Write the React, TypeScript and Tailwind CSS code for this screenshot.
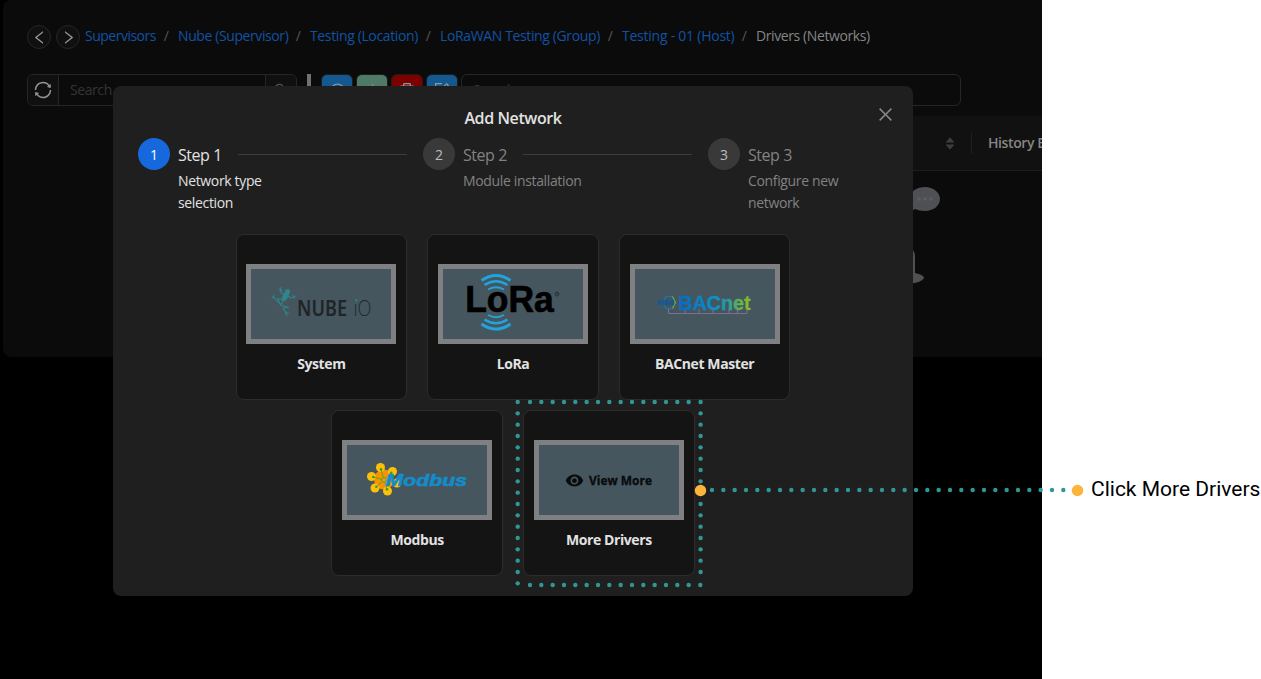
import React from "react";
import {
  AiOutlineSync,
  AiOutlineSearch,
  AiOutlinePlus,
  AiOutlineDelete,
  AiOutlineForm,
  AiOutlineLeft,
  AiOutlineRight,
  AiOutlineClose,
  AiFillCaretUp,
  AiFillCaretDown,
} from "react-icons/ai";
import { MdVisibility } from "react-icons/md";

const crumbs = [
  { text: "Supervisors", slot: "w-[93px]", tracking: "tracking-[-0.5px]" },
  { text: "Nube (Supervisor)", slot: "w-[132px]", tracking: "tracking-[-0.4px]" },
  { text: "Testing (Location)", slot: "w-[130px]", tracking: "tracking-[-0.37px]" },
  { text: "LoRaWAN Testing (Group)", slot: "w-[182px]", tracking: "tracking-[-0.37px]" },
  { text: "Testing - 01 (Host)", slot: "w-[134px]", tracking: "tracking-[-0.24px]" },
];

function Breadcrumbs() {
  return (
    <div className="flex h-6 items-center pl-6">
      <div className="flex size-6 items-center justify-center rounded-full border border-[#262626] bg-[#101010] text-[#949494]">
        <AiOutlineLeft size={17} className="shrink-0" />
      </div>
      <div className="ml-[5px] flex size-6 items-center justify-center rounded-full border border-[#262626] bg-[#101010] text-[#949494]">
        <AiOutlineRight size={17} className="shrink-0" />
      </div>
      <div className="ml-[5px] flex whitespace-nowrap pb-[2px] text-[14px] leading-[22px] text-[#1252a4]">
        {crumbs.map((c) => (
          <div key={c.text} className={"flex justify-between " + c.slot}>
            <span className={c.tracking}>{c.text}</span>
            <span className="pr-[9px] text-[#565656]">/</span>
          </div>
        ))}
        <span className="tracking-[-0.4px] text-[#858585]">Drivers (Networks)</span>
      </div>
    </div>
  );
}

const tool = "flex h-8 w-8 items-center justify-center rounded-md border border-[#1c1c1c] text-[#8b979f]";

function Toolbar() {
  return (
    <div className="mt-[25px] flex h-8 pl-6">
      <div className="flex w-[270px] overflow-hidden rounded-md border border-[#262626] text-[14px]">
        <div className="flex w-[31px] items-center justify-center border-r border-[#262626] bg-[#101010] text-[#949494]">
          <AiOutlineSync size={20} />
        </div>
        <div className="flex flex-1 items-center pb-px pl-[11px] tracking-[-0.42px] text-[#343434]">Search</div>
        <div className="flex w-[31px] items-center justify-center border-l border-[#262626] bg-[#101010] text-[#505050]">
          <AiOutlineSearch size={16} />
        </div>
      </div>
      <div className="ml-[10px] w-1 bg-[#707070]" />
      <div className="ml-[10px] flex gap-[3px]">
        <div className={tool + " bg-[#15578f]"}><AiOutlineSync size={17} /></div>
        <div className={tool + " bg-[#4f7b66]"}><AiOutlinePlus size={17} /></div>
        <div className={tool + " bg-[#7c0000]"}><AiOutlineDelete size={18} /></div>
        <div className={tool + " bg-[#15578f]"}><AiOutlineForm size={18} /></div>
      </div>
      <div className="ml-[3px] flex w-[500px] items-center rounded-md border border-[#262626] pb-px pl-[11px] text-[14px] tracking-[-0.42px] text-[#343434]">
        Search
      </div>
    </div>
  );
}

function TableArea() {
  return (
    <div className="mt-[10px] ml-[300px] h-[241px] overflow-hidden">
      <div className="flex h-[55px] items-center justify-end border-b border-[#1c1c1c] bg-[#111111]">
        <div className="flex flex-col items-center text-[#3d3d3d]">
          <AiFillCaretUp size={12} className="-mb-[5px]" />
          <AiFillCaretDown size={12} />
        </div>
        <div className="ml-[15px] h-[22px] w-px bg-[#202020]" />
        <div className="w-[70px] overflow-hidden whitespace-nowrap pb-px pl-4 text-[14px] font-semibold tracking-[-0.4px] text-[#858585]">
          History Enable
        </div>
      </div>
      <div className="flex justify-end pt-3 pr-[101px]">
        <svg width="42" height="105" viewBox="0 0 42 105">
          <path d="M12 28 L14 22 Q12 20 11 16 C11 8 18 4 26 4 C34 4 41 9 41 16 C41 23 34 28 26 28 C22 28 19 27 16 26 Z" fill="#4f5053" />
          <circle cx="20" cy="16" r="1.8" fill="#5c5d60" />
          <circle cx="26" cy="16" r="1.8" fill="#5c5d60" />
          <circle cx="32" cy="16" r="1.8" fill="#5c5d60" />
          <path d="M8 62 L14 67 Q16 70 16 73 L16 90 Q25 92 25 95 Q23 100 8 101 Z" fill="#505050" />
          <path d="M8 69 L13 68 L14 91 L8 94 Z" fill="#5b5b5b" />
        </svg>
      </div>
    </div>
  );
}

const steps = [
  { n: 1, title: "Step 1", text: "Network type selection", on: true },
  { n: 2, title: "Step 2", text: "Module installation", on: false },
  { n: 3, title: "Step 3", text: "Configure new network", on: false },
];

function Steps() {
  return (
    <div className="flex gap-4 pl-[25px]">
      {steps.map((s) => (
        <div key={s.n} className={"flex gap-2 " + (s.n === 3 ? "w-[160px]" : "w-[269px]")}>
          <div
            className={
              "flex size-8 shrink-0 items-center justify-center rounded-full pt-px text-[14px] " +
              (s.on ? "bg-[#1668dc] text-white" : "bg-[#393939] text-[#bdbdbd]")
            }
          >
            {s.n}
          </div>
          <div className="flex-1">
            <div className="flex h-8 items-center">
              <span className={"w-[60px] whitespace-nowrap pt-px text-[16px] tracking-[-0.45px] " + (s.on ? "text-[#e2e2e2]" : "text-[#828282]")}>
                {s.title}
              </span>
              {s.n < 3 && <div className="h-px flex-1 bg-[#3c3c3c]" />}
            </div>
            <div className={"w-[125px] text-[14px] leading-[22px] tracking-[-0.35px] " + (s.on ? "text-[#e2e2e2]" : "text-[#828282]")}>
              <div className={s.n === 2 ? "whitespace-nowrap" : "w-[105px]"}>{s.text}</div>
            </div>
          </div>
        </div>
      ))}
    </div>
  );
}

function NubeLogo() {
  return (
    <svg width="140" height="70" viewBox="0 0 140 70">
      <g stroke="#30858a" fill="none" strokeLinejoin="round" strokeLinecap="round">
        <ellipse cx="34.5" cy="27" rx="2.8" ry="6" transform="rotate(28 34.5 27)" fill="#30858a" stroke="none" />
        <circle cx="36.5" cy="22.5" r="2.6" fill="#30858a" stroke="none" />
        <path d="M34 25 L30.500 24.500 L29.500 21" strokeWidth="1.200" />
        <path d="M37 27 L39.500 29 L43.500 27.500" strokeWidth="1.200" />
        <path d="M32.500 31 L26.500 29.500 L29 35 L22.500 28" strokeWidth="1.100" />
        <path d="M31.500 33 L29.500 36 L37.500 38.500 L32 39 L35.500 44.500" strokeWidth="1.200" />
        <path d="M27.500 20 L31.500 21.500 M30 18.500 L29 22.500 M42 26 L43.500 29.500 M41.500 28.500 L45 27 M21 27.500 L24 28.500 M23 25.500 L22 29.500 M34 45 L37.500 44 M35 43 L36 47" strokeWidth="0.900" />
      </g>
      <text x="46" y="46.5" fontFamily="Noto Sans, Open Sans, sans-serif" fontWeight="600" fontSize="21.500" textLength="50" lengthAdjust="spacingAndGlyphs" fill="#1f2427">NUBE</text>
      <text x="102.5" y="46.5" fontFamily="Open Sans, sans-serif" fontWeight="300" fontSize="21.500" textLength="18" lengthAdjust="spacingAndGlyphs" fill="#1f2a2f">iO</text>
      <circle cx="105.200" cy="31.5" r="1.300" fill="#30858a" />
    </svg>
  );
}

function LoraLogo() {
  return (
    <svg width="140" height="70" viewBox="0 0 140 70">
      <g fill="none" stroke="#22a3dc">
        <path d="M38.500 11.500 Q53 1.500 67.500 11.500" strokeWidth="3" />
        <path d="M41.500 16 Q53 8.500 64.500 16" strokeWidth="2.500" />
        <path d="M45 20.500 Q53 16 61 20.500" strokeWidth="2" />
        <path d="M38.500 55 Q53 65 67.500 55" strokeWidth="3" />
        <path d="M41.500 50.500 Q53 58 64.500 50.500" strokeWidth="2.500" />
        <path d="M45 46 Q53 50.500 61 46" strokeWidth="2" />
      </g>
      <text x="22.200" y="42.700" fontFamily="Liberation Sans, sans-serif" fontWeight="700" fontSize="36" textLength="88.500" lengthAdjust="spacingAndGlyphs" fill="#000" stroke="#000" strokeWidth="0.700">LoRa</text>
      <circle cx="114" cy="25" r="2" fill="none" stroke="#222c31" strokeWidth="0.800" />
      <path d="M113.500 26.300 V23.800 H114.500 V25 L115 26.300" fill="none" stroke="#222c31" strokeWidth="0.400" />
    </svg>
  );
}

function BacnetLogo() {
  return (
    <svg width="140" height="70" viewBox="0 0 140 70">
      <defs>
        <linearGradient id="bac" x1="0" x2="1">
          <stop offset="0" stopColor="#0868bd" />
          <stop offset="0.5" stopColor="#0b92c9" />
          <stop offset="0.68" stopColor="#269da2" />
          <stop offset="0.85" stopColor="#64b54e" />
          <stop offset="1" stopColor="#8ebd18" />
        </linearGradient>
      </defs>
      <path d="M33.500 39 V44.500 H112 V41 M50 40 V44.500 M64 40 V44.500 M78 40 V44.500 M94 40 V44.500 M102.500 40 V44.500" fill="none" stroke="#7b7196" strokeWidth="1" />
      <path d="M28 33.500 L31 27.500 H37.500 L40.500 33.500 L37.500 39.500 H31 Z" fill="none" stroke="#147da6" strokeWidth="1.200" />
      <path d="M37.500 27.500 L40.500 33.500 L37.500 39.500" fill="none" stroke="#71a543" strokeWidth="1.200" />
      <text x="22" y="35.700" fontFamily="Liberation Sans, sans-serif" fontWeight="700" fontSize="6.500" textLength="17" lengthAdjust="spacingAndGlyphs" fill="#12569a" stroke="#12569a" strokeWidth="0.300">ASHRAE</text>
      <text x="43.500" y="41" fontFamily="Liberation Sans, sans-serif" fontWeight="700" fontSize="20" textLength="72" lengthAdjust="spacingAndGlyphs" fill="url(#bac)" stroke="url(#bac)" strokeWidth="0.300">BACnet</text>
      <text x="115" y="30" fontFamily="Liberation Sans, sans-serif" fontSize="3" fill="#2a6288">TM</text>
    </svg>
  );
}

const petals = [
  [33.5, 22.5],
  [45.5, 26.5],
  [24.5, 31.5],
  [28, 43],
  [40.5, 46],
  [50, 38],
];

function ModbusLogo() {
  return (
    <svg width="140" height="70" viewBox="0 0 140 70">
      <circle cx="37" cy="34.500" r="10" fill="#f59300" />
      {petals.map(([x, y]) => (
        <circle key={x} cx={x} cy={y} r="4.500" fill="#fcc106" />
      ))}
      {petals.map(([x, y]) => (
        <g key={x}>
          <path d={`M37 35 L${x + (37 - x) * 0.15} ${y + (35 - y) * 0.15}`} stroke="#56a52a" strokeWidth="0.900" />
          <circle cx={x + (37 - x) * 0.15} cy={y + (35 - y) * 0.15} r="1.300" fill="#3d9b2d" />
        </g>
      ))}
      <circle cx="37" cy="35" r="2.200" fill="#f5a300" stroke="#56a52a" />
      <text x="38.500" y="41" fontFamily="Liberation Sans, sans-serif" fontWeight="700" fontStyle="italic" fontSize="16.500" textLength="81.500" lengthAdjust="spacingAndGlyphs" fill="#148ccb" stroke="#148ccb" strokeWidth="0.600">Modbus</text>
    </svg>
  );
}

function ViewMore() {
  return (
    <div className="flex h-[70px] w-[140px] items-center pl-[26px] text-[#080b0c]">
      <MdVisibility size={19} />
      <svg width="70" height="24" viewBox="0 0 70 24">
        <text x="5" y="16.500" fontFamily="Open Sans, Noto Sans, sans-serif" fontWeight="700" fontSize="12.500" textLength="63" lengthAdjust="spacingAndGlyphs" fill="#080b0c" stroke="#080b0c" strokeWidth="0.300">View More</text>
      </svg>
    </div>
  );
}

function DriverCard({ label, children }: { label: string; children: React.ReactNode }) {
  return (
    <div className="flex h-[166px] w-[171.67px] flex-col items-center rounded-lg border border-[#2c2c2c] bg-[#141414] pt-[29px]">
      <div className="h-20 w-[150px] shrink-0 border-[5px] border-[#808080] bg-[#45565f]">{children}</div>
      <div className="mt-[9px] text-[14px] font-bold leading-[22px] tracking-[-0.4px] text-[#e2e2e2]">{label}</div>
    </div>
  );
}

function AddNetworkDialog() {
  return (
    <div className="absolute left-[113px] top-[86px] h-[510px] w-[800px] rounded-lg bg-[#1f1f1f]">
      <div className="flex h-[52px] justify-center pt-5">
        <h1 className="text-[16px] font-semibold leading-6 tracking-[-0.4px] text-[#e2e2e2]">Add Network</h1>
        <AiOutlineClose size={19} className="absolute right-[18.5px] top-[18.5px] text-[#8a8a8a]" />
      </div>
      <div className="h-24">
        <Steps />
      </div>
      <div className="flex flex-wrap justify-center gap-x-5 gap-y-[10px] px-[100px]">
        <DriverCard label="System"><NubeLogo /></DriverCard>
        <DriverCard label="LoRa"><LoraLogo /></DriverCard>
        <DriverCard label="BACnet Master"><BacnetLogo /></DriverCard>
        <DriverCard label="Modbus"><ModbusLogo /></DriverCard>
        <DriverCard label="More Drivers"><ViewMore /></DriverCard>
      </div>
    </div>
  );
}

const pitch = 34 / 3;
const dots: number[][] = [];
for (let i = 0; i < 17; i++) dots.push([517.7, 402 + i * pitch]);
for (let i = 0; i < 15; i++) dots.push([530 + i * pitch, 402], [530 + i * pitch, 585]);
for (let i = 0; i < 16; i++) if (i !== 8) dots.push([700.6, 402 + i * pitch]);
dots.push([700.3, 585]);
for (let i = 0; i < 32; i++) dots.push([712 + i * pitch, 490]);

function Callout() {
  return (
    <svg className="absolute left-0 top-0" width="1261" height="679" viewBox="0 0 1261 679">
      {dots.map(([x, y], i) => (
        <circle key={i} cx={x} cy={y} r="2.200" fill="#319795" />
      ))}
      <circle cx="700.500" cy="490.500" r="5.700" fill="#fbb53c" />
      <circle cx="1077.500" cy="490.500" r="5.700" fill="#fbb53c" />
    </svg>
  );
}

export default function App() {
  return (
    <div className="relative flex h-[679px] w-[1261px] overflow-hidden bg-white font-['Open_Sans','Noto_Sans',sans-serif]">
      <div className="h-full w-[1042px] bg-black pl-[3px]">
        <div className="h-[357px] rounded-l-lg bg-[#0b0b0b] pt-[25px]">
          <Breadcrumbs />
          <Toolbar />
          <TableArea />
        </div>
      </div>
      <div className="flex flex-1 items-start pl-[49px] pt-[474px]">
        <span className="whitespace-nowrap font-['Roboto',sans-serif] text-[21px] leading-[30px] text-black">Click More Drivers</span>
      </div>
      <AddNetworkDialog />
      <Callout />
    </div>
  );
}
